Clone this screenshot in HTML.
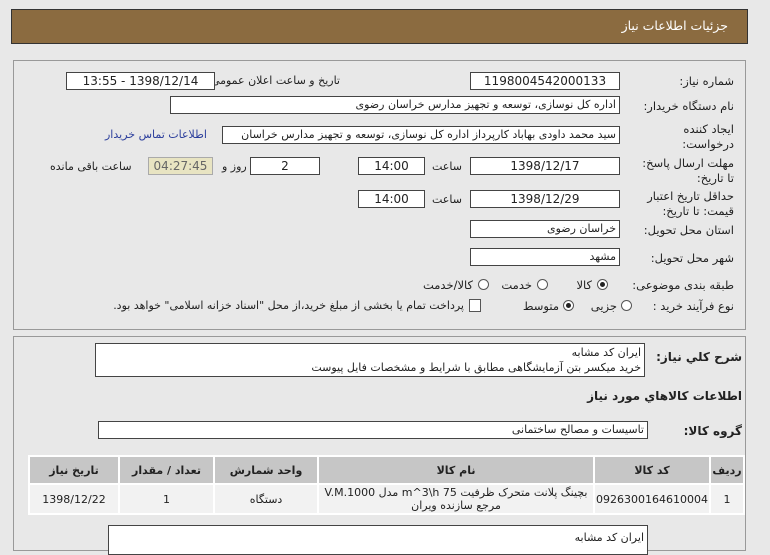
<!DOCTYPE html>
<html><head><meta charset="utf-8"><style>
body{margin:0;width:770px;height:545px;background:#e8e8e8;font-family:"DejaVu Sans","Liberation Sans",sans-serif;font-size:11px;color:#222;position:relative;overflow:hidden}
.a{position:absolute;white-space:nowrap}
.box{position:absolute;background:#fff;border:1px solid #444;box-sizing:border-box;direction:rtl;padding:0 3px;line-height:16px;white-space:nowrap;overflow:hidden}
.c{text-align:center}
.l{direction:rtl;text-align:right;font-size:11.5px}
.panel{position:absolute;border:1px solid #999;box-sizing:border-box}
.rad{position:absolute;width:11px;height:11px;border:1px solid #555;border-radius:50%;background:#fff;box-sizing:border-box}
.rad.on::after{content:"";position:absolute;left:2px;top:2px;width:5px;height:5px;border-radius:50%;background:#222}
table{position:absolute;border-collapse:separate;border-spacing:2px;background:#fff;direction:rtl}
td,th{text-align:center;font-size:11px}
th{background:#c6c6c6;height:24px;font-weight:bold}
td{background:#f2f2f2;height:26px;line-height:13px}
</style></head><body>
<div class="a" style="left:11px;top:9px;width:737px;height:35px;background:#8b6b40;border:1px solid #333;box-sizing:border-box"></div>
<div class="a" style="right:42px;top:18px;color:#fff;font-size:12.5px">جزئیات اطلاعات نیاز</div>

<div class="panel" style="left:13px;top:60px;width:733px;height:270px"></div>
<div class="a l" style="right:36px;top:74px">شماره نیاز:</div>
<div class="box c" style="left:470px;top:72px;width:150px;height:18px;font-size:12px">1198004542000133</div>
<div class="a l" style="right:430px;top:74px;font-size:11px">تاریخ و ساعت اعلان عمومی:</div>
<div class="box c" style="left:66px;top:72px;width:149px;height:18px;font-size:12px">1398/12/14 - 13:55</div>

<div class="a l" style="right:36px;top:99px">نام دستگاه خریدار:</div>
<div class="box" style="left:170px;top:96px;width:450px;height:18px">اداره کل نوسازی، توسعه و تجهیز مدارس خراسان رضوی</div>

<div class="a l" style="right:36px;top:122px;line-height:15px">ایجاد کننده<br>درخواست:</div>
<div class="box" style="left:222px;top:126px;width:398px;height:18px">سید محمد داودی بهاباد کارپرداز اداره کل نوسازی، توسعه و تجهیز مدارس خراسان</div>
<div class="a" style="left:105px;top:128px;color:#2b3e9c">اطلاعات تماس خریدار</div>

<div class="a l" style="right:36px;top:156px;line-height:15px">مهلت ارسال پاسخ:<br>تا تاریخ:</div>
<div class="box c" style="left:470px;top:157px;width:150px;height:18px;font-size:12px">1398/12/17</div>
<div class="a" style="left:432px;top:160px">ساعت</div>
<div class="box c" style="left:358px;top:157px;width:67px;height:18px;font-size:12px">14:00</div>
<div class="box c" style="left:250px;top:157px;width:70px;height:18px;font-size:12px">2</div>
<div class="a" style="left:222px;top:160px">روز و</div>
<div class="box c" style="left:148px;top:157px;width:65px;height:18px;background:#e8e4c2;border-color:#aaa;color:#666;font-size:12px">04:27:45</div>
<div class="a" style="left:50px;top:160px">ساعت باقی مانده</div>

<div class="a l" style="right:36px;top:189px;line-height:15px">حداقل تاریخ اعتبار<br>قیمت: تا تاریخ:</div>
<div class="box c" style="left:470px;top:190px;width:150px;height:18px;font-size:12px">1398/12/29</div>
<div class="a" style="left:432px;top:193px">ساعت</div>
<div class="box c" style="left:358px;top:190px;width:67px;height:18px;font-size:12px">14:00</div>

<div class="a l" style="right:36px;top:223px">استان محل تحویل:</div>
<div class="box" style="left:470px;top:220px;width:150px;height:18px">خراسان رضوی</div>
<div class="a l" style="right:36px;top:251px">شهر محل تحویل:</div>
<div class="box" style="left:470px;top:248px;width:150px;height:18px">مشهد</div>

<div class="a l" style="right:36px;top:278px">طبقه بندی موضوعی:</div>
<div class="rad on" style="left:597px;top:279px"></div><div class="a l" style="right:178px;top:278px">کالا</div>
<div class="rad" style="left:537px;top:279px"></div><div class="a l" style="right:238px;top:278px">خدمت</div>
<div class="rad" style="left:478px;top:279px"></div><div class="a l" style="right:297px;top:278px">کالا/خدمت</div>

<div class="a l" style="right:36px;top:299px">نوع فرآیند خرید :</div>
<div class="rad" style="left:621px;top:300px"></div><div class="a l" style="right:153px;top:299px">جزیی</div>
<div class="rad on" style="left:563px;top:300px"></div><div class="a l" style="right:211px;top:299px">متوسط</div>
<div class="a" style="left:469px;top:299px;width:10px;height:11px;border:1px solid #555;background:#fff"></div>
<div class="a l" style="right:306px;top:299px;font-size:11px">پرداخت تمام یا بخشی از مبلغ خرید،از محل "اسناد خزانه اسلامی" خواهد بود.</div>

<div class="panel" style="left:13px;top:336px;width:733px;height:215px"></div>
<div class="a l" style="right:28px;top:350px;font-weight:bold;font-size:12px">شرح کلي نیاز:</div>
<div class="box" style="left:95px;top:343px;width:550px;height:34px;line-height:15px;padding-top:1px">ایران کد مشابه<br>خرید میکسر بتن آزمایشگاهی مطابق با شرایط و مشخصات فایل پیوست</div>
<div class="a l" style="right:28px;top:389px;font-weight:bold;font-size:12px">اطلاعات کالاهاي مورد نیاز</div>
<div class="a l" style="right:28px;top:424px;font-weight:bold;font-size:12px">گروه کالا:</div>
<div class="box" style="left:98px;top:421px;width:550px;height:18px">تاسیسات و مصالح ساختمانی</div>

<table style="left:28px;top:455px;width:717px">
<tr><th style="width:30px">ردیف</th><th style="width:98px">کد کالا</th><th style="width:272px">نام کالا</th><th style="width:100px">واحد شمارش</th><th style="width:91px">تعداد / مقدار</th><th>تاریخ نیاز</th></tr>
<tr><td>1</td><td>0926300164610004</td><td>بچینگ پلانت متحرک ظرفیت 75 m^3\h مدل V.M.1000<br>مرجع سازنده ویران</td><td>دستگاه</td><td>1</td><td>1398/12/22</td></tr>
</table>

<div class="box" style="left:108px;top:525px;width:540px;height:30px;line-height:15px;padding-top:4px">ایران کد مشابه</div>
</body></html>
